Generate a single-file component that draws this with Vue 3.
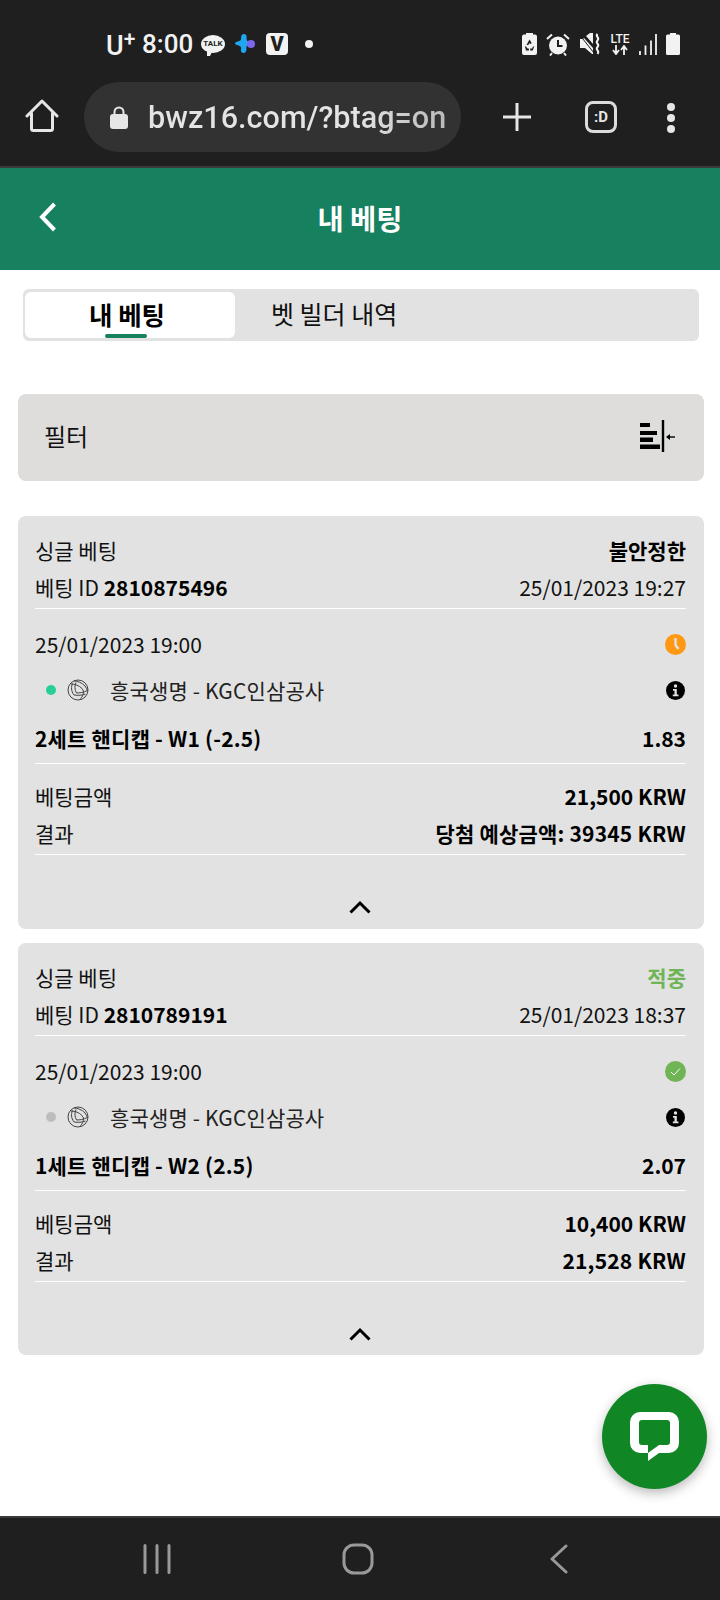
<script setup>
import { ref } from 'vue'

const tabs = ['내 베팅', '벳 빌더 내역']
const activeTab = ref(0)

const bets = [
  {
    id: '2810875496',
    status: '불안정한',
    placed: '25/01/2023 19:27',
    start: '25/01/2023 19:00',
    state: 'pending',
    match: '흥국생명 - KGC인삼공사',
    market: '2세트 핸디캡 - W1 (-2.5)',
    odds: '1.83',
    amount: '21,500 KRW',
    result: '당첨 예상금액: 39345 KRW'
  },
  {
    id: '2810789191',
    status: '적중',
    placed: '25/01/2023 18:37',
    start: '25/01/2023 19:00',
    state: 'won',
    match: '흥국생명 - KGC인삼공사',
    market: '1세트 핸디캡 - W2 (2.5)',
    odds: '2.07',
    amount: '10,400 KRW',
    result: '21,528 KRW'
  }
]
</script>

<template>
  <div class="phone">
    <div class="browser-top">
      <div class="status-bar">
        <div class="status-left">
          <span class="carrier">U<sup>+</sup></span>
          <span class="clock">8:00</span>
          <span class="talk"><span>TALK</span></span>
          <svg class="sparkle" width="21" height="20" viewBox="0 0 21 20">
            <path d="M9 0c2 0 3 2 2.600 4-.3 1.500.4 2.500 1.400 3.500 1 1.200.8 3-.4 3.800-1 .8-1.400 1.700-1.200 3.200.4 2.600-1 4.500-2.900 4.500-2 0-3.100-2-2.500-4 .4-1.600-.2-2.700-1.800-3.300C2.200 11.100 0 10.800 0 9.500s2.400-1.800 4.200-2.400c1.500-.5 2-1.500 1.900-3C5.800 1.800 7 0 9 0z" fill="#1ea7ef" />
            <circle cx="16" cy="10" r="4" fill="#7b68ee" />
          </svg>
          <span class="v-box">V</span>
          <span class="dot"></span>
        </div>
        <div class="status-right">
          <svg width="15" height="22" viewBox="0 0 15 22">
            <path d="M4 0h7v1.500h2a2 2 0 0 1 2 2V20a2 2 0 0 1-2 2H2a2 2 0 0 1-2-2V3.500a2 2 0 0 1 2-2h2z" fill="#f2f2f2" />
            <path d="M7.500 6.500l2.300 3.700-1.600.9-.7-1.200-1.200 2H4.500zM2.800 13l1.600.9 1.200 1.500h1.300v2.200H4zM12.300 13l-1.500 4.600H8.200v-2.200h2l.5-1.500z" fill="#1f1f1f" />
          </svg>
          <svg width="24" height="23" viewBox="0 0 24 23">
            <circle cx="12" cy="12.500" r="9" fill="#f2f2f2" />
            <path d="M12 7v6h4.500" fill="none" stroke="#1f1f1f" stroke-width="2" />
            <path d="M1 6l5-4.500M23 6l-5-4.500M6 20l-2 2.500M18 20l2 2.500" stroke="#f2f2f2" stroke-width="2" fill="none" />
          </svg>
          <svg width="22" height="22" viewBox="0 0 22 22">
            <path d="M1 6h3l1-1 9 10v6h-1L6 15H1zM7 3l4-3h3v11z" fill="#f2f2f2" />
            <path d="M0 1l15 19" stroke="#1f1f1f" stroke-width="1" />
            <path d="M18.500 1c-3 3 3 3 0 6.500s3 3 0 6.500 3 3 0 7" fill="none" stroke="#f2f2f2" stroke-width="2" />
          </svg>
          <span class="lte">
            <span class="lte-text">LTE</span>
            <svg width="16" height="10" viewBox="0 0 16 10">
              <path d="M4 0v8M1 5l3 4 3-4M12 10V2M9 5l3-4 3 4" fill="none" stroke="#f2f2f2" stroke-width="1.800" />
            </svg>
          </span>
          <svg width="18" height="21" viewBox="0 0 18 21">
            <path d="M1 17v4M6.500 11.500V21M12 6.500V21M17 0v21" stroke="#f2f2f2" stroke-width="1.800" fill="none" />
          </svg>
          <svg width="14" height="22" viewBox="0 0 14 22">
            <path d="M4 0h6v1.500h2.500A1.500 1.500 0 0 1 14 3v17.500a1.500 1.500 0 0 1-1.500 1.500h-11A1.500 1.500 0 0 1 0 20.500V3a1.500 1.500 0 0 1 1.500-1.500H4z" fill="#f2f2f2" />
          </svg>
        </div>
      </div>
      <div class="address-row">
        <svg class="home" width="34" height="34" viewBox="0 0 34 34">
          <path d="M2 17L17 2l15 15M6.500 14v15.500a2 2 0 0 0 2 2h17a2 2 0 0 0 2-2V14" fill="none" stroke="#e6e6e6" stroke-width="3" stroke-linejoin="round" stroke-linecap="round" />
        </svg>
        <div class="address-pill">
          <svg width="18" height="23" viewBox="0 0 18 23">
            <path d="M4.500 9V6a4.500 4.500 0 0 1 9 0v3" fill="none" stroke="#e6e6e6" stroke-width="2" />
            <rect x="0" y="8" width="18" height="15" rx="3" fill="#e6e6e6" />
          </svg>
          <span class="url">bwz16.com/?btag=on</span>
        </div>
        <svg class="plus" width="28" height="28" viewBox="0 0 28 28">
          <path d="M14 0v28M0 14h28" stroke="#e6e6e6" stroke-width="3" stroke-linecap="round" />
        </svg>
        <span class="tab-count">:D</span>
        <div class="menu-dots"><i></i><i></i><i></i></div>
      </div>
    </div>

    <header class="page-header">
      <svg class="back" width="18" height="30" viewBox="0 0 18 30">
        <path d="M15.500 2L3 15l12.500 13" fill="none" stroke="#fff" stroke-width="4" />
      </svg>
      <h1>내 베팅</h1>
    </header>

    <main class="content">
      <div class="tabs">
        <button
          v-for="(tab, i) in tabs"
          :key="tab"
          :class="['tab', { active: activeTab === i }]"
          @click="activeTab = i"
        >
          {{ tab }}
        </button>
      </div>

      <div class="filter">
        <span>필터</span>
        <svg width="36" height="32" viewBox="0 0 36 32">
          <path d="M0 3h10v4H0zM0 11h17v4H0zM0 17.500h13v4.500H0zM0 24.500h20V29H0z" fill="#000" />
          <path d="M23 0v32" stroke="#000" stroke-width="2.400" />
          <path d="M35 17h-6" stroke="#000" stroke-width="1.400" />
          <path d="M26 17l4-3v6z" fill="#000" />
        </svg>
      </div>

      <article v-for="bet in bets" :key="bet.id" class="bet-card">
        <div class="section">
          <div class="row">
            <span>싱글 베팅</span>
            <b :class="{ won: bet.state === 'won' }">{{ bet.status }}</b>
          </div>
          <div class="row">
            <span>베팅 ID <b>{{ bet.id }}</b></span>
            <span>{{ bet.placed }}</span>
          </div>
        </div>

        <div class="section detail">
          <div class="row tall">
            <span>{{ bet.start }}</span>
            <svg v-if="bet.state === 'pending'" width="21" height="21" viewBox="0 0 21 21">
              <circle cx="10.500" cy="10.500" r="10.500" fill="#ff9812" />
              <path d="M10.500 4v7l3 4" fill="none" stroke="#e2e2e2" stroke-width="2.400" />
            </svg>
            <svg v-else width="21" height="21" viewBox="0 0 21 21">
              <circle cx="10.500" cy="10.500" r="10.500" fill="#6fb455" />
              <path d="M6 11l3 3 6-6.500" fill="none" stroke="#fff" stroke-width="1" />
            </svg>
          </div>
          <div class="row tall">
            <span class="match">
              <i :class="['live-dot', { over: bet.state === 'won' }]"></i>
              <svg class="ball" width="22" height="22" viewBox="0 0 22 22">
                <circle cx="11" cy="11" r="10" fill="none" stroke="#444" stroke-width="1" />
                <path d="M7 2c3 0 8 1.500 11 5 1 1.500 2 3 2.500 5M4 5c4 0 8 1.500 11 4.500l1.500 2.500M5.500 4.500C4 8 4 12 7 16M9 3.500C7.500 7 7.500 10.500 9.500 14M9.500 14c3 0 7-.5 11-2.500M7 16c4 .5 8 .5 11.500 -1M16.500 12c0 3-1 6-3.500 8.500" fill="none" stroke="#444" stroke-width="1" />
              </svg>
              {{ bet.match }}
            </span>
            <svg class="info" width="19" height="19" viewBox="0 0 19 19">
              <circle cx="9.500" cy="9.500" r="9.500" fill="#000" />
              <circle cx="9.500" cy="5" r="1.700" fill="#e2e2e2" />
              <path d="M7 8h3.800v5.500H12.500v1.700H6.800v-1.700h1.700V9.700H7z" fill="#e2e2e2" />
            </svg>
          </div>
          <div class="row market">
            <b class="market-name">{{ bet.market }}</b>
            <b>{{ bet.odds }}</b>
          </div>
        </div>

        <div class="section amounts">
          <div class="row">
            <span>베팅금액</span>
            <b>{{ bet.amount }}</b>
          </div>
          <div class="row">
            <span>결과</span>
            <b class="result">{{ bet.result }}</b>
          </div>
        </div>

        <div class="collapse">
          <svg width="22" height="14" viewBox="0 0 22 14">
            <path d="M1.500 12.500L11 3l9.500 9.500" fill="none" stroke="#000" stroke-width="3" />
          </svg>
        </div>
      </article>
    </main>

    <button class="chat-fab">
      <svg width="50" height="50" viewBox="0 0 50 50">
        <path fill-rule="evenodd" fill="#fff" d="M10 0h29a10 10 0 0 1 10 10v21a10 10 0 0 1-10 10H29L18 49v-8h-8A10 10 0 0 1 0 31V10A10 10 0 0 1 10 0zM12 8a3 3 0 0 0-3 3v19a3 3 0 0 0 3 3h6v8l11-8h8a3 3 0 0 0 3-3V11a3 3 0 0 0-3-3z" />
      </svg>
    </button>

    <nav class="bottom-nav">
      <svg width="28" height="30" viewBox="0 0 28 30">
        <path d="M2 1.500v27M14 1.500v27M26 1.500v27" stroke="#999" stroke-width="3" stroke-linecap="round" />
      </svg>
      <svg width="32" height="32" viewBox="0 0 32 32">
        <rect x="2" y="2" width="28" height="28" rx="10" fill="none" stroke="#999" stroke-width="3" />
      </svg>
      <svg class="nav-back" width="20" height="30" viewBox="0 0 20 30">
        <path d="M17 2L3 15l14 13" fill="none" stroke="#999" stroke-width="3" stroke-linecap="round" stroke-linejoin="round" />
      </svg>
    </nav>
  </div>
</template>

<style>
html,
body {
  margin: 0;
  background: #fff;
}
</style>

<style scoped>
.phone {
  position: relative;
  width: 720px;
  height: 1600px;
  display: flex;
  flex-direction: column;
  overflow: hidden;
  background: #fff;
  font-family: "Noto Sans CJK KR", "Noto Sans", sans-serif;
  color: #111;
}

/* browser chrome */
.browser-top {
  height: 166px;
  flex-shrink: 0;
  background: #1f1f1f;
  border-bottom: 2px solid #3a3a3a;
  font-family: Roboto, "Noto Sans", sans-serif;
  color: #f2f2f2;
}

.status-bar {
  height: 82px;
  display: flex;
  justify-content: space-between;
  align-items: flex-start;
  padding: 32px 40px 0 106px;
  box-sizing: border-box;
}

.status-left,
.status-right {
  display: flex;
  align-items: center;
  height: 24px;
}

.status-right {
  gap: 9px;
}

.carrier {
  font-size: 27px;
  font-weight: 500;
  line-height: 24px;
  width: 36px;
  position: relative;
  top: 2px;
}

.carrier sup {
  font-size: 21px;
  font-weight: 500;
  line-height: 0;
  vertical-align: 9px;
}

.clock {
  font-size: 26px;
  font-weight: 500;
  line-height: 24px;
  width: 59px;
}

.talk {
  position: relative;
  width: 24px;
  height: 18px;
  margin-right: 10px;
  border-radius: 50%;
  background: #f2f2f2;
  color: #1f1f1f;
  font-size: 8px;
  font-weight: 700;
  line-height: 18px;
  text-align: center;
}

.talk::after {
  content: "";
  position: absolute;
  left: 6px;
  top: 15px;
  border-left: 3px solid #f2f2f2;
  border-right: 3px solid transparent;
  border-top: 6px solid #f2f2f2;
}

.talk span {
  display: block;
}

.sparkle {
  margin-right: 10px;
}

.v-box {
  width: 22px;
  height: 22px;
  border-radius: 4px;
  background: #f2f2f2;
  color: #1f1f1f;
  font-size: 20px;
  font-weight: 900;
  line-height: 22px;
  text-align: center;
}

.dot {
  width: 8px;
  height: 8px;
  margin-left: 17px;
  border-radius: 50%;
  background: #f2f2f2;
}

.lte {
  display: flex;
  flex-direction: column;
  align-items: center;
  width: 20px;
}

.lte-text {
  font-size: 12px;
  font-weight: 500;
  line-height: 12px;
}

.address-row {
  height: 84px;
  display: flex;
  align-items: flex-start;
  padding-left: 25px;
  color: #e6e6e6;
}

.home {
  margin-top: 17px;
}

.address-pill {
  width: 377px;
  height: 70px;
  margin-left: 25px;
  display: flex;
  align-items: center;
  gap: 20px;
  padding-left: 26px;
  box-sizing: border-box;
  border-radius: 35px;
  background: #323232;
  overflow: hidden;
}

.url {
  font-size: 30.600px;
  font-weight: 500;
  white-space: nowrap;
  background: linear-gradient(90deg, #e4e4e4 70%, #b9b9b9 100%);
  -webkit-background-clip: text;
  background-clip: text;
  color: transparent;
}

.plus {
  margin: 21px 0 0 42px;
}

.tab-count {
  width: 32px;
  height: 32px;
  margin: 19px 0 0 54px;
  box-sizing: border-box;
  border: 3px solid #dcdcdc;
  border-radius: 8px;
  font-size: 15px;
  font-weight: 700;
  line-height: 26px;
  text-align: center;
}

.menu-dots {
  display: flex;
  flex-direction: column;
  gap: 3px;
  margin: 21px 0 0 50px;
}

.menu-dots i {
  width: 8px;
  height: 8px;
  border-radius: 50%;
  background: #e6e6e6;
}

/* page header */
.page-header {
  height: 102px;
  flex-shrink: 0;
  display: flex;
  align-items: center;
  justify-content: center;
  position: relative;
  background: #16805f;
  color: #fff;
}

.page-header h1 {
  margin: 0 0 4px;
  font-size: 28.500px;
  font-weight: 700;
}

.back {
  position: absolute;
  left: 39px;
  top: 34px;
}

/* content */
.content {
  flex: 1;
  padding: 19px 16px 0 18px;
}

.tabs {
  display: flex;
  height: 52px;
  margin: 0 5px 0 5px;
  padding: 3px 3px 3px 2px;
  box-sizing: border-box;
  border-radius: 6px;
  background: #e2e2e2;
}

.tab {
  position: relative;
  width: 210px;
  padding: 0 0 4px;
  border: none;
  border-radius: 6px;
  background: transparent;
  color: #111;
  font-family: inherit;
  font-size: 25px;
  cursor: pointer;
}

.tab:nth-child(2) {
  width: auto;
  margin-left: 36px;
}

.tab.active {
  padding-right: 6px;
  background: #fff;
  color: #000;
  font-size: 25.500px;
  font-weight: 700;
}

.tab.active::after {
  content: "";
  position: absolute;
  left: 80px;
  bottom: 0;
  width: 42px;
  height: 4px;
  border-radius: 2px;
  background: #16805f;
}

.filter {
  height: 87px;
  margin-top: 53px;
  margin-bottom: 35px;
  display: flex;
  align-items: center;
  justify-content: space-between;
  padding: 0 28px 0 26px;
  border-radius: 8px;
  background: #dedddc;
  font-size: 24px;
}

.filter span {
  margin-bottom: 4px;
}

.filter svg {
  margin-bottom: 3px;
}

.bet-card {
  height: 413px;
  margin-bottom: 14px;
  padding: 18px 18px 0 17px;
  box-sizing: border-box;
  border-radius: 8px;
  background: #e2e2e2;
  font-size: 21px;
}

.bet-card:last-child {
  height: 412px;
}

.section {
  border-bottom: 1px solid #fff;
}

.row {
  height: 37px;
  display: flex;
  align-items: center;
  justify-content: space-between;
  padding-bottom: 6px;
  box-sizing: border-box;
}

.row b {
  font-weight: 700;
  color: #000;
}

.row b.won {
  color: #6fb455;
}

.detail {
  padding-top: 14px;
}

.row.tall {
  height: 46px;
  padding-bottom: 4px;
}

.row.market {
  height: 48px;
  padding-bottom: 3px;
}

.market-name,
.result {
  letter-spacing: 0.200px;
}

.amounts {
  padding-top: 16px;
}

.match {
  display: flex;
  align-items: center;
  color: #222;
  letter-spacing: 0.150px;
}

.live-dot {
  width: 10px;
  height: 10px;
  margin-left: 11px;
  border-radius: 50%;
  background: #27cf94;
}

.live-dot.over {
  background: #bdbdbd;
}

.ball {
  margin: 0 21px 0 11px;
}

.info {
  margin-right: 1px;
}

.collapse {
  display: flex;
  justify-content: center;
  padding-top: 45px;
  padding-right: 1px;
}

/* chat button */
.chat-fab {
  position: absolute;
  left: 602px;
  top: 1384px;
  width: 105px;
  height: 105px;
  padding: 0;
  display: flex;
  align-items: center;
  justify-content: center;
  border: none;
  border-radius: 50%;
  background: #118625;
  box-shadow: 0 4px 12px rgba(0, 0, 0, 0.28);
}

/* android nav */
.bottom-nav {
  height: 84px;
  flex-shrink: 0;
  display: flex;
  align-items: center;
  gap: 171px;
  padding-left: 143px;
  box-sizing: border-box;
  border-top: 2px solid #3a3a3a;
  background: #1f1f1f;
}

.nav-back {
  margin-left: 4px;
}
</style>
